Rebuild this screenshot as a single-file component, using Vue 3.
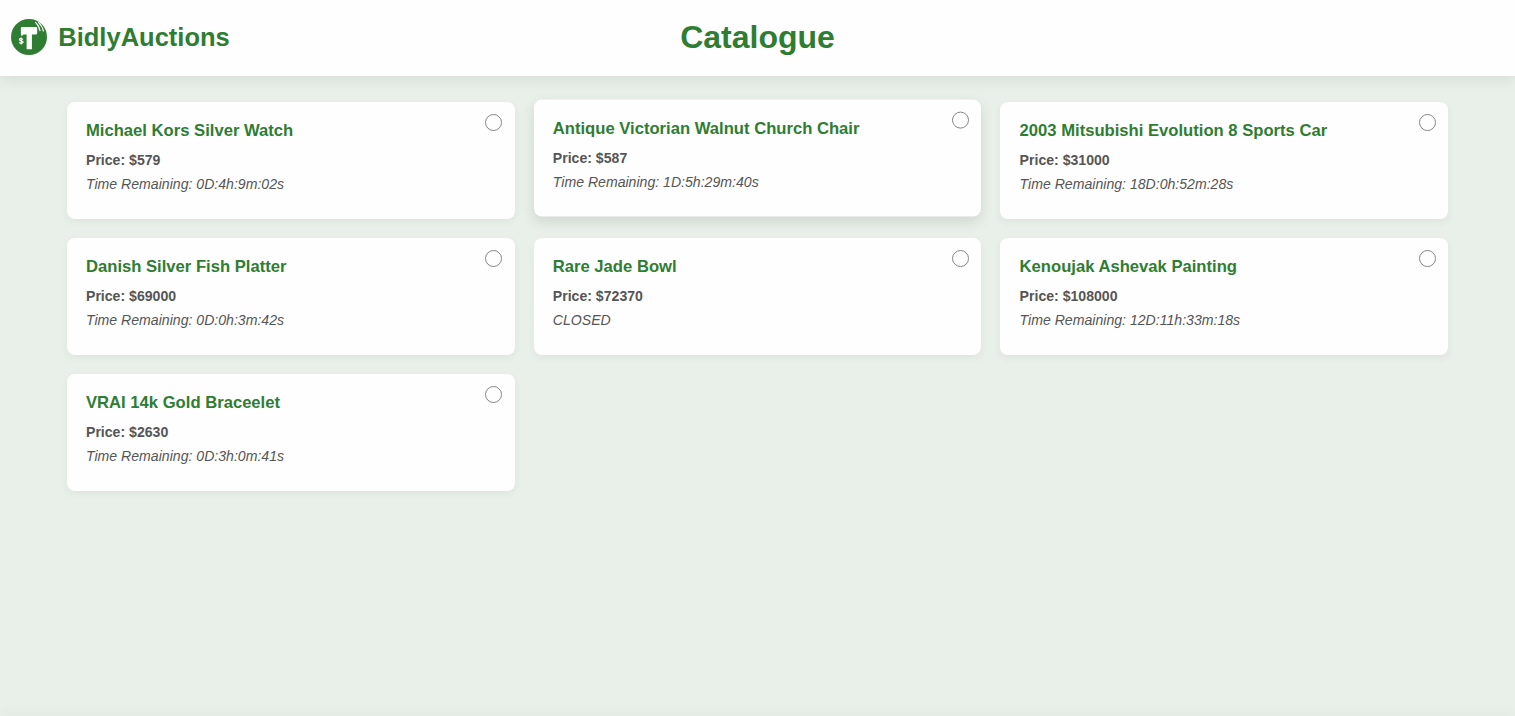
<script setup>
const items = [
  { name: 'Michael Kors Silver Watch', price: 579, status: 'Time Remaining: 0D:4h:9m:02s' },
  { name: 'Antique Victorian Walnut Church Chair', price: 587, status: 'Time Remaining: 1D:5h:29m:40s', raised: true },
  { name: '2003 Mitsubishi Evolution 8 Sports Car', price: 31000, status: 'Time Remaining: 18D:0h:52m:28s' },
  { name: 'Danish Silver Fish Platter', price: 69000, status: 'Time Remaining: 0D:0h:3m:42s' },
  { name: 'Rare Jade Bowl', price: 72370, status: 'CLOSED' },
  { name: 'Kenoujak Ashevak Painting', price: 108000, status: 'Time Remaining: 12D:11h:33m:18s' },
  { name: 'VRAI 14k Gold Braceelet', price: 2630, status: 'Time Remaining: 0D:3h:0m:41s' },
]
</script>

<template>
  <div class="page">
    <header class="header">
      <div class="brand">
        <svg class="logo" viewBox="0 0 36 36" aria-hidden="true">
          <circle cx="18" cy="18" r="18" fill="#2e7d32" />
          <path d="M11 8.1h13.8q1.4 0 1.4 1.3v4.6q0 1.5-1.6 1.5h-3.7v14.7h-5.3V15.5h-3.2q-.7 1.2-1.6 1.2-.9 0-.9-1.2V9.3q0-1.2 1.1-1.2z" fill="#fff" />
          <path d="M24.3 3q3.7 3.5 4.9 9.2M27.2 3.2q4 3.7 5.3 9.3" fill="none" stroke="#fff" stroke-width="1.1" />
          <path d="M12.1 20.2q-3.7-1.3-3.7 .4 0 1 1.9 1.3 1.9 .4 1.8 1.4-.2 1.6-3.9 .3M10.2 18.4v7" fill="none" stroke="#fff" stroke-width="1.2" />
        </svg>
        <span class="brand-name">BidlyAuctions</span>
      </div>
      <h1>Catalogue</h1>
    </header>
    <main class="grid">
      <article v-for="item in items" :key="item.name" class="card" :class="{ raised: item.raised }">
        <h2>{{ item.name }}</h2>
        <p class="price">Price: ${{ item.price }}</p>
        <p class="status">{{ item.status }}</p>
        <span class="radio"></span>
      </article>
    </main>
    <footer class="footer"></footer>
  </div>
</template>

<style>
body { background: #e8f0e9; overflow: hidden; }
</style>

<style scoped>
.page {
  height: 716px;
  display: flex;
  flex-direction: column;
  overflow: hidden;
  font-family: "Liberation Sans", Arial, sans-serif;
}
.header {
  height: 76px;
  flex: none;
  display: grid;
  grid-template-columns: 1fr auto 1fr;
  align-items: center;
  background: #fefefe;
  box-shadow: 0 4px 14px rgba(0, 0, 0, 0.08);
  color: #2e7d32;
}
.brand { display: flex; align-items: center; padding: 0 0 2px 11px; gap: 11.3px; }
.logo { width: 36px; height: 36px; }
.brand-name { font-size: 25.5px; font-weight: bold; line-height: 30px; }
h1 { margin: 0; padding-bottom: 2px; font-size: 32px; line-height: 36px; }
.grid {
  flex: 1;
  display: grid;
  grid-template-columns: repeat(3, 1fr);
  grid-auto-rows: 117px;
  gap: 19px;
  padding: 25.5px 66.8px 0;
}
.card {
  position: relative;
  box-sizing: border-box;
  padding: 19.5px 19.2px;
  border-radius: 8px;
  background: #fefefe;
  box-shadow: 0 3px 8px rgba(0, 0, 0, 0.05);
}
.raised { transform: translateY(-2.4px); box-shadow: 0 5px 14px rgba(0, 0, 0, 0.11); }
h2 { margin: 0 0 10px; font-size: 16.64px; line-height: 20px; color: #2e7d32; }
p { margin: 0; font-size: 14.1px; line-height: 19px; color: #555; }
.price { font-weight: bold; margin-bottom: 4.5px; }
.status { font-style: italic; }
.radio {
  position: absolute;
  top: 12px;
  right: 12.5px;
  box-sizing: border-box;
  width: 17px;
  height: 17px;
  border: 1px solid #858585;
  border-radius: 50%;
}
.footer { height: 2px; flex: none; margin-bottom: -2px; box-shadow: 0 -2px 10px rgba(0, 0, 0, 0.1); }
</style>
